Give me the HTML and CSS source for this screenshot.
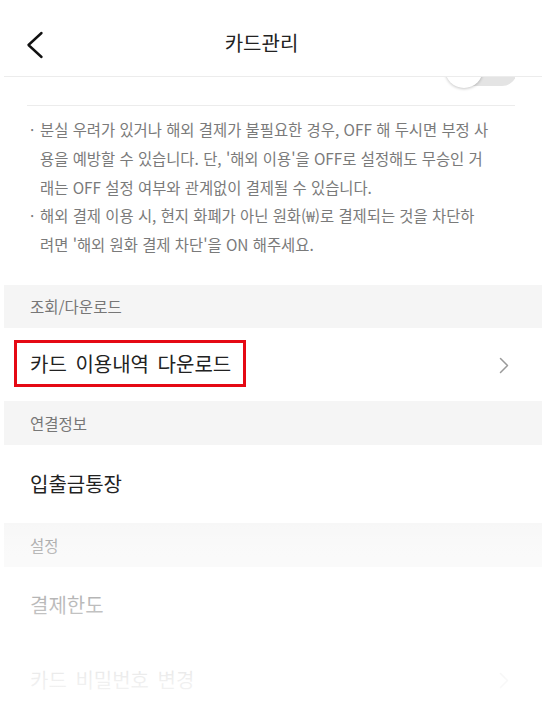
FILE: index.html
```html
<!DOCTYPE html>
<html lang="ko">
<head>
<meta charset="utf-8">
<title>카드관리</title>
<link rel="stylesheet" href="styles.css">
</head>
<body>
<div class="app">
  <header class="header">
    <button class="back" aria-label="뒤로">
      <svg width="20" height="30" viewBox="0 0 20 30"><polyline points="15.5,2 2.5,14 15.5,26" fill="none" stroke="#111" stroke-width="2.4" stroke-linecap="round" stroke-linejoin="round"/></svg>
    </button>
    <h1 class="title">카드관리</h1>
  </header>

  <main class="content">
    <div class="toggle-row">
      <div class="toggle"><span class="track"></span><span class="thumb"></span></div>
    </div>

    <ul class="notes">
      <li>분실 우려가 있거나 해외 결제가 불필요한 경우, OFF 해 두시면 부정 사<br>용을 예방할 수 있습니다. 단, '해외 이용'을 OFF로 설정해도 무승인 거<br>래는 OFF 설정 여부와 관계없이 결제될 수 있습니다.</li>
      <li>해외 결제 이용 시, 현지 화폐가 아닌 원화(₩)로 결제되는 것을 차단하<br>려면 '해외 원화 결제 차단'을 ON 해주세요.</li>
    </ul>

    <div class="section s1">조회/다운로드</div>
    <div class="row r1">
      <span class="highlight">카드 이용내역 다운로드</span>
      <svg class="chev" width="10" height="17" viewBox="0 0 10 17"><polyline points="1.5,1.5 8.5,8.5 1.5,15.5" fill="none" stroke="#9a9a9a" stroke-width="1.5" stroke-linecap="round" stroke-linejoin="round"/></svg>
    </div>

    <div class="section s2">연결정보</div>
    <div class="row r2"><span>입출금통장</span></div>

    <div class="section s3">설정</div>
    <div class="row r3"><span>결제한도</span></div>
    <div class="row r4">
      <span>카드 비밀번호 변경</span>
      <svg class="chev" width="10" height="17" viewBox="0 0 10 17"><polyline points="1.5,1.5 8.5,8.5 1.5,15.5" fill="none" stroke="#9a9a9a" stroke-width="1.5" stroke-linecap="round" stroke-linejoin="round"/></svg>
    </div>
  </main>
</div>
<div class="fade"></div>
</body>
</html>
```
FILE: styles.css
```css
* { box-sizing: border-box; }
html, body { margin: 0; padding: 0; background: #fff; }
body {
  font-family: "Noto Sans CJK KR", "Noto Sans", sans-serif;
  color: #222;
  width: 542px;
  height: 716px;
  overflow: hidden;
  position: relative;
}
.app { margin-left: 4px; }

.header {
  height: 77px;
  border-bottom: 1px solid #ececec;
  display: flex;
  align-items: center;
}
.back {
  border: 0;
  background: none;
  padding: 0;
  margin-left: 22px;
  width: 20px;
  height: 30px;
  display: flex;
  margin-top: 15px;
}
.title {
  flex: 1;
  margin: 8px 65px 0 0;
  text-align: center;
  font-size: 20px;
  font-weight: 400;
  color: #222;
}

.toggle-row {
  height: 29px;
  margin: 0 27px 0 23px;
  border-bottom: 1px solid #ececec;
  overflow: hidden;
  display: flex;
  justify-content: flex-end;
}
.toggle {
  width: 72px;
  height: 40px;
  margin-top: -29px;
  margin-right: -2px;
  display: grid;
}
.track {
  grid-area: 1 / 1;
  align-self: center;
  height: 30px;
  margin-left: 4px;
  border-radius: 15px;
  background: #e4e4e4;
  margin-top: 6px;
}
.thumb {
  grid-area: 1 / 1;
  width: 38px;
  height: 38px;
  border-radius: 50%;
  background: #fff;
  box-shadow: 0 1px 3px rgba(0,0,0,0.22);
  align-self: end;
}

.notes {
  list-style: none;
  margin: 0 0 26px;
  padding: 9px 10px 0 36px;
  font-size: 15.4px;
  line-height: 28.75px;
  color: #7a7a7a;
}
.notes li { position: relative; white-space: nowrap; }
.notes li::before {
  content: "·";
  position: absolute;
  left: -10px;
  top: 0;
}

.section {
  background: #f5f5f5;
  height: 43px;
  display: flex;
  align-items: center;
  padding-left: 26px;
  font-size: 15.5px;
  color: #777;
}
.s2 { height: 44px; }
.s3 { height: 44px; }

.row {
  display: flex;
  align-items: center;
  justify-content: space-between;
  padding: 0 33px 0 26px;
  font-size: 20px;
  word-spacing: 3px;
  color: #222;
}
.r1 { height: 73px; }
.r2 { height: 78px; }
.r3 { height: 75px; }
.r4 { height: 75px; }

.highlight {
  display: inline-flex;
  align-items: center;
  height: 47px;
  margin-left: -16px;
  margin-top: -2px;
  padding: 0 12px 0 13px;
  border: 3px solid #e50914;
  word-spacing: 3px;
}
.chev { display: block; margin-top: 2px; }

.fade {
  position: absolute;
  left: 0;
  right: 0;
  bottom: 0;
  height: 216px;
  pointer-events: none;
  background: linear-gradient(to bottom,
    rgba(255,255,255,0) 0%,
    rgba(255,255,255,0.45) 21%,
    rgba(255,255,255,0.7) 49%,
    rgba(255,255,255,0.93) 83%,
    rgba(255,255,255,0.96) 100%);
}
```
